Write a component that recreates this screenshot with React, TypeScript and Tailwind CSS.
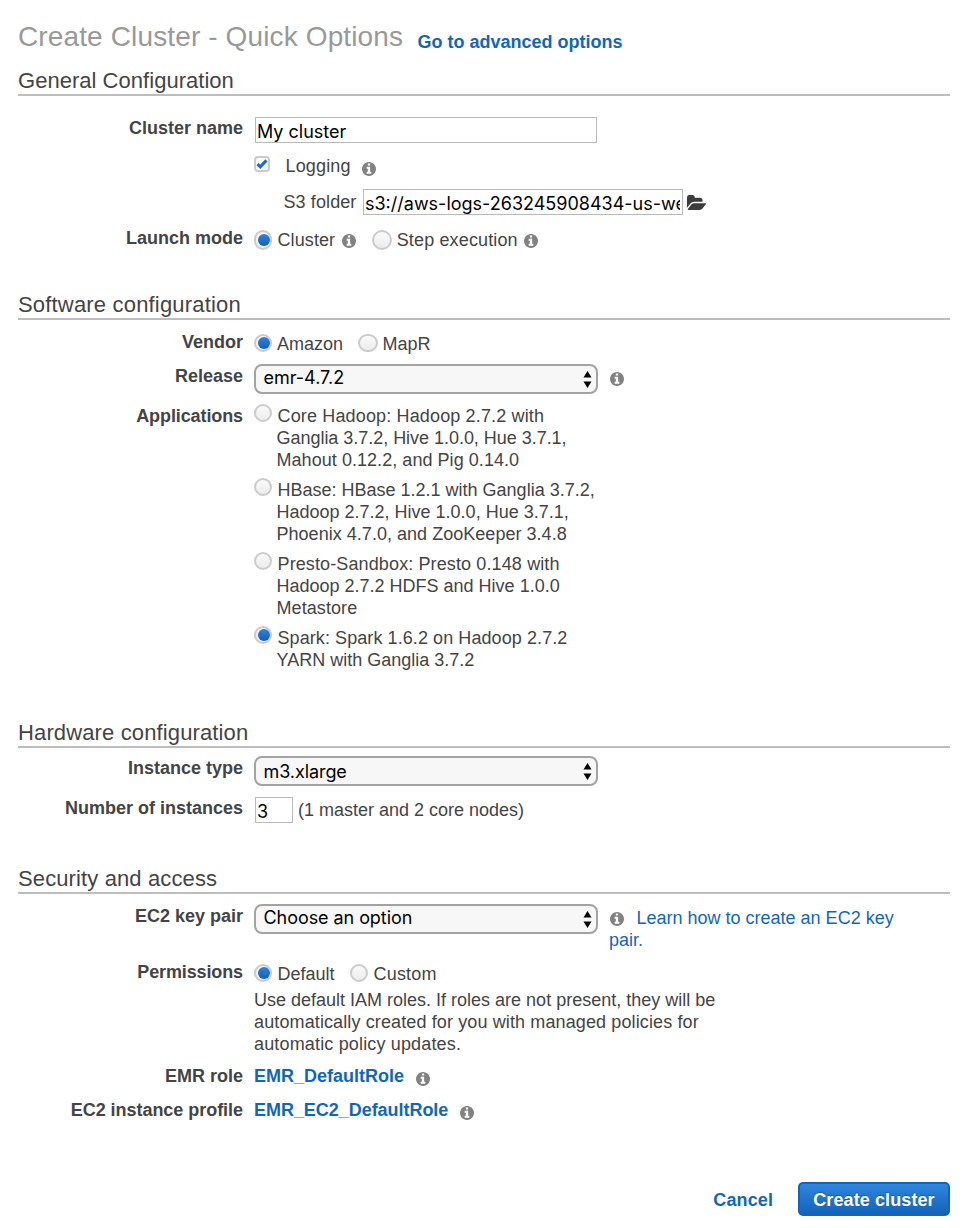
import type { ReactNode } from "react";

function Info({ className = "" }: { className?: string }) {
  return (
    <svg width="14" height="14" viewBox="128 128 1536 1536" fill="#828282" className={`shrink-0 ${className}`}>
      <path d="M1152 1376v-160q0-14-9-23t-23-9h-96v-512q0-14-9-23t-23-9h-320q-14 0-23 9t-9 23v160q0 14 9 23t23 9h96v320h-96q-14 0-23 9t-9 23v160q0 14 9 23t23 9h448q14 0 23-9t9-23zm-128-896v-160q0-14-9-23t-23-9h-192q-14 0-23 9t-9 23v160q0 14 9 23t23 9h192q14 0 23-9t9-23zm640 416q0 209-103 385.5t-279.5 279.5-385.5 103-385.5-103-279.5-279.5-103-385.5 103-385.5 279.5-279.5 385.5-103 385.5 103 279.5 279.5 103 385.5z" />
    </svg>
  );
}

function FolderIcon({ className = "" }: { className?: string }) {
  return (
    <svg width="19" height="15" viewBox="0 128 1879 1408" preserveAspectRatio="none" fill="#3c3c3c" className={`shrink-0 ${className}`}>
      <path d="M1879 952q0 31-31 66l-336 396q-43 51-120.500 86.500t-143.500 35.500h-1088q-34 0-60.500-13t-26.500-43q0-31 31-66l336-396q43-51 120.500-86.500t143.500-35.500h1088q34 0 60.500 13t26.500 43zm-343-344v160h-832q-94 0-197 47.500t-164 119.500l-337 396-5 6q0-4-.5-12.500t-.5-12.500v-960q0-92 66-158t158-66h320q92 0 158 66t66 158v32h544q92 0 158 66t66 158z" />
    </svg>
  );
}

function SectionTitle({ children, className = "" }: { children: ReactNode; className?: string }) {
  return (
    <h2 className={`h-7 shrink-0 border-b-2 border-[#bdbdbd] text-[22px] leading-[26px] ${className}`}>{children}</h2>
  );
}

function Row({ label, className = "", labelClass = "", children }: {
  label?: string;
  className?: string;
  labelClass?: string;
  children: ReactNode;
}) {
  return (
    <div className={`flex shrink-0 items-start ${className}`}>
      <div className={`mr-[11px] w-[225px] shrink-0 text-right font-bold ${labelClass}`}>{label}</div>
      {children}
    </div>
  );
}

function Radio({ checked = false, className = "", size = "h-[18px] w-[18px]" }: {
  checked?: boolean;
  className?: string;
  size?: string;
}) {
  return (
    <span
      role="radio"
      aria-checked={checked}
      className={`flex shrink-0 items-center justify-center rounded-full border-2 border-[#cbcbcb] bg-linear-to-b from-[#fafafa] to-[#ececec] ${size} ${className}`}
    >
      {checked && <span className="h-3 w-3 shrink-0 translate-x-px rounded-full bg-linear-to-b from-[#2e82d8] to-[#1061b8]" />}
    </span>
  );
}

function Select({ value, textClass = "" }: { value: string; textClass?: string }) {
  return (
    <div className="flex h-[30px] w-[344px] shrink-0 items-start justify-between rounded-lg border-2 border-[#a3a3a3] bg-[#f7f7f7] pr-1 pl-[7.5px] font-[Inter,sans-serif] text-black">
      <span className={textClass}>{value}</span>
      <svg width="9" height="17" viewBox="0 0 9 17" className="mt-[5px]" fill="#000">
        <path d="M4.500 0 8.500 6.500h-8zM4.500 17 .5 10.500h8z" />
      </svg>
    </div>
  );
}

function TextBox({ value, className = "" }: { value: string; className?: string }) {
  return (
    <input
      readOnly
      defaultValue={value}
      className={`ml-px h-[26px] shrink-0 border border-[#b9b9b9] bg-white pt-[3px] pr-0.5 pl-px font-[Inter,sans-serif] leading-[22px] text-black outline-none ${className}`}
    />
  );
}

const applications = [
  {
    lines: [
      { text: "Core Hadoop: Hadoop 2.7.2 with", track: "tracking-[0.15px]" },
      { text: "Ganglia 3.7.2, Hive 1.0.0, Hue 3.7.1,", track: "tracking-[-0.03px]" },
      { text: "Mahout 0.12.2, and Pig 0.14.0", track: "tracking-[0.05px]" },
    ],
  },
  {
    lines: [
      { text: "HBase: HBase 1.2.1 with Ganglia 3.7.2,", track: "" },
      { text: "Hadoop 2.7.2, Hive 1.0.0, Hue 3.7.1,", track: "" },
      { text: "Phoenix 4.7.0, and ZooKeeper 3.4.8", track: "tracking-[0.03px]" },
    ],
  },
  {
    lines: [
      { text: "Presto-Sandbox: Presto 0.148 with", track: "tracking-[0.12px]" },
      { text: "Hadoop 2.7.2 HDFS and Hive 1.0.0", track: "" },
      { text: "Metastore", track: "tracking-[0.08px]" },
    ],
  },
  {
    checked: true,
    lines: [
      { text: "Spark: Spark 1.6.2 on Hadoop 2.7.2", track: "tracking-[0.08px]" },
      { text: "YARN with Ganglia 3.7.2", track: "" },
    ],
  },
];

export default function App() {
  return (
    <div className="flex h-[1228px] w-[968px] flex-col overflow-hidden bg-white px-[18px] pt-[21px] font-['Liberation_Sans',Arial,sans-serif] text-[18px] leading-[22px] whitespace-nowrap text-[#444]">
      <header className="flex h-8 shrink-0 items-start">
        <h1 className="w-[399.5px] text-[28px] leading-8 tracking-[0.13px] text-[#999]">Create Cluster - Quick Options</h1>
        <a className="mt-[10px] font-bold text-[#1166bb]">Go to advanced options</a>
      </header>

      <SectionTitle className="mt-[15px] tracking-[0.03px]">General Configuration</SectionTitle>
      <Row label="Cluster name" className="mt-[21px] h-[38px]">
        <TextBox value="My cluster" className="w-[342px]" />
      </Row>
      <Row className="h-[34px]">
        <span className="mt-px flex h-4 w-4 items-center justify-center rounded-[4px] border-2 border-[#cbcbcb] bg-[#fafafa]">
          <svg width="12" height="10" viewBox="0 0 12 10" fill="none" stroke="#1a6cc4" strokeWidth="3" className="shrink-0">
            <path d="M1.500 5.200 4.300 7.800 10.400 1.400" />
          </svg>
        </span>
        <span className="ml-[15.5px] w-[65px] tracking-[0.15px]">Logging</span>
        <Info className="mt-[7px] ml-[11.5px]" />
      </Row>
      <Row className="h-[38px]">
        <span className="mt-[2px] ml-[29.5px] w-[78.5px] tracking-[0.1px]">S3 folder</span>
        <TextBox value="s3://aws-logs-263245908434-us-west-2" className="w-[320px]" />
        <FolderIcon className="mt-[6px] ml-1" />
      </Row>
      <Row label="Launch mode" className="h-[65px]">
        <Radio checked size="h-5 w-[18px]" className="mt-[3px]" />
        <span className="mt-[2px] ml-[5.5px] tracking-[0.1px]">Cluster</span>
        <Info className="mt-[7px] ml-[7px]" />
        <Radio size="h-5 w-5" className="mt-[3px] ml-[15.5px]" />
        <span className="mt-[2px] ml-[5px] tracking-[0.14px]">Step execution</span>
        <Info className="mt-[7px] ml-[6px]" />
      </Row>

      <SectionTitle className="tracking-[0.18px]">Software configuration</SectionTitle>
      <Row label="Vendor" className="mt-[11px] h-[33px]">
        <Radio checked className="mt-[3px]" />
        <span className="mt-[2px] ml-[5px]">Amazon</span>
        <Radio size="h-[18px] w-5" className="mt-[3px] ml-[15px]" />
        <span className="mt-[2px] ml-[4.500px]">MapR</span>
      </Row>
      <Row label="Release" labelClass="mt-px" className="h-[41px]">
        <Select value="emr-4.7.2" textClass="mt-px" />
        <Info className="mt-2 ml-3" />
      </Row>
      <Row label="Applications" labelClass="tracking-[-0.1px]" className="h-[315px]">
        <div className="flex flex-col gap-2">
          {applications.map((app) => (
            <div key={app.lines[0].text} className="flex items-start">
              <Radio checked={app.checked} className="-mt-px mr-[4.500px]" />
              <div>
                {app.lines.map((line, i) => (
                  <div key={line.text} className={`${i === 0 ? "pl-px" : ""} ${line.track}`}>{line.text}</div>
                ))}
              </div>
            </div>
          ))}
        </div>
      </Row>

      <SectionTitle className="tracking-[0.13px]">Hardware configuration</SectionTitle>
      <Row label="Instance type" labelClass="mt-px" className="mt-2 h-[41px]">
        <Select value="m3.xlarge" textClass="mt-[3px] tracking-[-0.08px]" />
      </Row>
      <Row label="Number of instances" className="h-[69px]">
        <TextBox value="3" className="w-[38px]" />
        <span className="mt-[2px] ml-[5px]">(1 master and 2 core nodes)</span>
      </Row>

      <SectionTitle className="tracking-[0.12px]">Security and access</SectionTitle>
      <Row label="EC2 key pair" labelClass="mt-px" className="mt-[10px] h-[57px]">
        <Select value="Choose an option" textClass="mt-px tracking-[-0.06px]" />
        <div className="mt-[3px] ml-[11px] text-[#1166bb]">
          <div className="flex items-start">
            <Info className="mt-[5px] ml-px" />
            <a className="ml-[12.500px]">Learn how to create an EC2 key</a>
          </div>
          <a className="block">pair.</a>
        </div>
      </Row>
      <Row label="Permissions" labelClass="tracking-[-0.12px]" className="h-[28px]">
        <Radio checked className="mt-[3px]" />
        <span className="mt-[2px] ml-[5.500px] w-[72.500px]">Default</span>
        <Radio className="mt-[3px]" />
        <span className="mt-[2px] ml-[5.500px] tracking-[0.2px]">Custom</span>
      </Row>
      <Row className="h-[76px]">
        <div>
          <div>Use default IAM roles. If roles are not present, they will be</div>
          <div className="tracking-[0.12px]">automatically created for you with managed policies for</div>
          <div className="tracking-[0.16px]">automatic policy updates.</div>
        </div>
      </Row>
      <Row label="EMR role" className="h-[34px]">
        <a className="font-bold text-[#1166bb]">EMR_DefaultRole</a>
        <Info className="mt-[7px] ml-3" />
      </Row>
      <Row label="EC2 instance profile" labelClass="tracking-[-0.04px]" className="h-[83px]">
        <a className="w-[195px] font-bold tracking-[-0.04px] text-[#1166bb]">EMR_EC2_DefaultRole</a>
        <Info className="mt-[7px] ml-[11px]" />
      </Row>

      <footer className="flex shrink-0 items-start justify-end font-bold">
        <a className="mt-[7px] mr-[25px] tracking-[0.1px] text-[#1166bb]">Cancel</a>
        <button className="h-[34px] w-[152px] rounded-[5px] border-2 border-[#1263b9] bg-linear-to-b from-[#3085dc] to-[#1264ba] pb-0.5 pt-[3px] leading-[22px] tracking-[0.1px] text-white [text-shadow:0_-1px_1px_rgba(0,40,100,0.35)]">
          Create cluster
        </button>
      </footer>
    </div>
  );
}
